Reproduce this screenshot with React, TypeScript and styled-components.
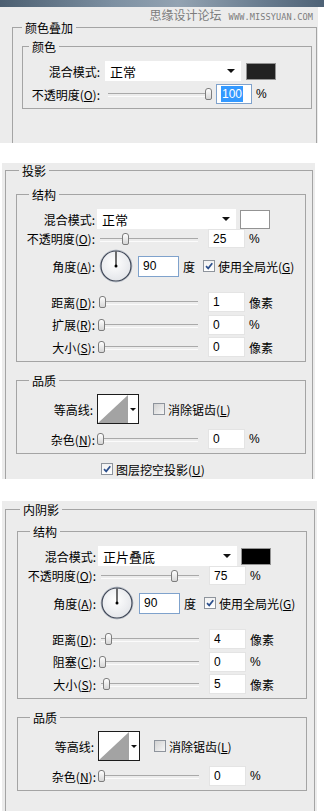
import React from 'react';
import styled, { createGlobalStyle } from 'styled-components';

const GlobalStyle = createGlobalStyle`
  * {
    box-sizing: border-box;
  }

  body {
    margin: 0;
    background: #fff;
    color: #000;
    font-family: 'Noto Sans CJK SC', 'Noto Sans', sans-serif;
    font-size: 12px;
  }
`;

const TitleBar = styled.div`
  height: 7px;
  background: linear-gradient(90deg, #4c5f71 0%, #7d90a2 35%, #93a3b2 55%, #6a7d90 80%, #4e6276 100%);
`;

type PanelProps = {
  $top: number;
  $left: number;
  $width: number;
  $height: number;
  $padTop: number;
  $padLeft: number;
};

const Panel = styled.section<PanelProps>`
  position: relative;
  display: flex;
  flex-direction: column;
  margin: ${(p) => p.$top}px 0 0 ${(p) => p.$left}px;
  width: ${(p) => p.$width}px;
  height: ${(p) => p.$height}px;
  padding: ${(p) => p.$padTop}px 0 0 ${(p) => p.$padLeft}px;
  background: #ececec;
  overflow: hidden;
`;

const Watermark = styled.div`
  position: absolute;
  top: 1px;
  right: 5px;
  display: flex;
  align-items: baseline;
  gap: 7px;
  color: #7c7c7c;
  line-height: 14px;
`;

const WatermarkCn = styled.span`
  font-size: 12px;
`;

const WatermarkEn = styled.span`
  font-family: 'DejaVu Sans Mono', 'Liberation Mono', monospace;
  font-size: 8.6px;
  letter-spacing: 0.1px;
`;

const Group = styled.fieldset<{ $width: number; $pad: string; $open?: boolean; $mt?: number }>`
  display: flex;
  flex-direction: column;
  flex: ${(p) => (p.$open ? 1 : 'none')};
  width: ${(p) => p.$width}px;
  min-width: 0;
  margin: ${(p) => p.$mt ?? 0}px 0 0 0;
  padding: ${(p) => p.$pad};
  border: 1px solid #a4a4a4;
  border-bottom: ${(p) => (p.$open ? 'none' : '1px solid #a4a4a4')};
`;

const Legend = styled.legend<{ $offset: number }>`
  margin-left: ${(p) => p.$offset}px;
  padding: 2px 3px 0;
  font-size: 12px;
  line-height: 12px;
`;

const Row = styled.div<{ $h: number; $mt?: number; $indent?: number }>`
  display: flex;
  align-items: center;
  height: ${(p) => p.$h}px;
  margin-top: ${(p) => p.$mt ?? 0}px;
  padding-left: ${(p) => p.$indent ?? 0}px;
  white-space: nowrap;
`;

const Label = styled.span<{ $w: number; $gap: number }>`
  flex: none;
  width: ${(p) => p.$w}px;
  margin-right: ${(p) => p.$gap}px;
  text-align: right;
`;

const Key = styled.span`
  text-decoration: underline;
`;

const Select = styled.div<{ $w: number; $h: number }>`
  display: flex;
  flex: none;
  align-items: center;
  justify-content: space-between;
  width: ${(p) => p.$w}px;
  height: ${(p) => p.$h}px;
  padding: 0 6px 0 5px;
  background: #fff;
  font-size: 13px;
`;

const Caret = styled.span`
  width: 0;
  height: 0;
  border-left: 4px solid transparent;
  border-right: 4px solid transparent;
  border-top: 4px solid #111;
`;

const Swatch = styled.div<{ $color: string; $h: number; $ml: number }>`
  flex: none;
  width: 30px;
  height: ${(p) => p.$h}px;
  margin-left: ${(p) => p.$ml}px;
  background: ${(p) => p.$color};
  border: 1px solid #939393;
`;

const SliderTrack = styled.div<{ $w: number }>`
  position: relative;
  flex: none;
  width: ${(p) => p.$w}px;
  height: 14px;

  &::before {
    content: '';
    position: absolute;
    left: 3px;
    right: 3px;
    top: 6px;
    height: 2px;
    border-top: 1px solid #a9a9a9;
    border-bottom: 1px solid #fbfbfb;
  }
`;

const Thumb = styled.span`
  position: absolute;
  top: 1px;
  width: 7px;
  height: 12px;
  margin-left: -3.5px;
  border: 1px solid #7d7d7d;
  border-radius: 3px 3px 2px 2px;
  background: linear-gradient(#ffffff, #d6d6d6);
`;

const NumBox = styled.div<{ $w: number; $h: number; $ml: number; $focus?: boolean }>`
  display: flex;
  flex: none;
  align-items: center;
  width: ${(p) => p.$w}px;
  height: ${(p) => p.$h}px;
  margin-left: ${(p) => p.$ml}px;
  padding-left: 4px;
  background: #fff;
  border: 1px solid ${(p) => (p.$focus ? '#7fa2cc' : '#e4e4e4')};
  font-family: 'Liberation Sans', Arial, sans-serif;
  font-size: 12px;
`;

const Selected = styled.span`
  padding: 1px 1px;
  background: #3399ff;
  color: #fff;
`;

const Unit = styled.span<{ $latin?: boolean }>`
  margin-left: 4px;
  font-family: ${(p) => (p.$latin ? "'Liberation Sans', Arial, sans-serif" : "'Noto Sans CJK SC', sans-serif")};
  font-size: 12px;
`;

const DialBox = styled.svg`
  flex: none;
  margin-left: 2px;
`;

const CheckBox = styled.span<{ $on: boolean }>`
  display: inline-flex;
  flex: none;
  align-items: center;
  justify-content: center;
  width: 12px;
  height: 12px;
  margin-left: ${(p) => (p.$on ? 8 : 14)}px;
  margin-right: 3px;
  border: 1px solid #8e949c;
  background: ${(p) => (p.$on ? 'linear-gradient(#f2f2f2, #ffffff)' : 'linear-gradient(135deg, #d2d2d2, #f6f6f6)')};
`;

const Contour = styled.div`
  display: flex;
  flex: none;
  width: 42px;
  height: 30px;
  border: 1px solid #1c1c1c;
  background: #fff;
`;

const ContourDrop = styled.div`
  display: flex;
  flex: 1;
  align-items: center;
  justify-content: center;

  &::after {
    content: '';
    border-left: 3px solid transparent;
    border-right: 3px solid transparent;
    border-top: 3px solid #111;
  }
`;

const Dial = () => (
  <DialBox width="34" height="34" viewBox="0 0 34 34">
    <defs>
      <radialGradient id="dialFill" cx="0.45" cy="0.4" r="0.6">
        <stop offset="0" stopColor="#ffffff" />
        <stop offset="1" stopColor="#e4e6ea" />
      </radialGradient>
    </defs>
    <circle cx="17" cy="17" r="16" fill="none" stroke="#b8bec8" strokeWidth="1" />
    <circle cx="17" cy="17" r="15" fill="url(#dialFill)" stroke="#3e4656" strokeWidth="1.2" />
    <line x1="17" y1="17" x2="17" y2="2.5" stroke="#111" strokeWidth="1.2" />
    <circle cx="17" cy="17" r="1.5" fill="#000" />
  </DialBox>
);

const Check = ({ on }: { on: boolean }) => (
  <CheckBox $on={on}>
    {on && (
      <svg width="10" height="10" viewBox="0 0 10 10">
        <path d="M2 5.2 L4.2 7.4 L8.3 2.2" fill="none" stroke="#2c4f8c" strokeWidth="1.7" />
      </svg>
    )}
  </CheckBox>
);

const ContourPicker = () => (
  <Contour>
    <svg width="30" height="28" viewBox="0 0 30 28">
      <polygon points="0,28 30,0 30,28" fill="#a3a3a3" />
    </svg>
    <ContourDrop />
  </Contour>
);

const Slider = ({ w, value }: { w: number; value: number }) => (
  <SliderTrack $w={w}>
    <Thumb style={{ left: `${3 + value * (w - 6)}px` }} />
  </SliderTrack>
);

/* shared measures of the two shadow panels */
const LW = 78;
const LG = 2;
const SW = 104;

type ShadowProps = {
  title: string;
  mode: string;
  swatch: string;
  swatchH: number;
  opacity: number;
  opacityText: string;
  rows: { label: string; key: string; value: number; text: string; unit: string }[];
  knockout?: boolean;
  panel: PanelProps;
  outerWidth: number;
  outerPad: string;
};

const ShadowPanel = (p: ShadowProps) => (
  <Panel {...p.panel}>
    <Group $width={p.outerWidth} $pad={p.outerPad} $open>
      <Legend $offset={3}>{p.title}</Legend>
      <Group $width={290} $pad="8px 0 4px 0">
        <Legend $offset={12}>结构</Legend>
        <Row $h={20}>
          <Label $w={LW} $gap={LG}>混合模式:</Label>
          <Select $w={139} $h={20}>
            {p.mode}
            <Caret />
          </Select>
          <Swatch $color={p.swatch} $h={p.swatchH} $ml={4} />
        </Row>
        <Row $h={19}>
          <Label $w={LW} $gap={LG}>
            不透明度(<Key>O</Key>):
          </Label>
          <Slider w={SW} value={p.opacity} />
          <NumBox $w={37} $h={19} $ml={7}>{p.opacityText}</NumBox>
          <Unit $latin>%</Unit>
        </Row>
        <Row $h={34} $mt={1}>
          <Label $w={LW} $gap={LG}>
            角度(<Key>A</Key>):
          </Label>
          <Dial />
          <NumBox $w={41} $h={21} $ml={5} $focus>90</NumBox>
          <Unit>度</Unit>
          <Check on />
          使用全局光(<Key>G</Key>)
        </Row>
        {p.rows.map((r, i) => (
          <Row key={r.label} $h={20} $mt={i === 0 ? 9 : 2.5}>
            <Label $w={LW} $gap={LG}>
              {r.label}(<Key>{r.key}</Key>):
            </Label>
            <Slider w={SW} value={r.value} />
            <NumBox $w={37} $h={20} $ml={7}>{r.text}</NumBox>
            <Unit $latin={r.unit === '%'}>{r.unit}</Unit>
          </Row>
        ))}
      </Group>
      <Group $width={290} $pad="7px 0 4px 0" $mt={11}>
        <Legend $offset={12}>品质</Legend>
        <Row $h={30}>
          <Label $w={76} $gap={4}>等高线:</Label>
          <ContourPicker />
          <Check on={false} />
          消除锯齿(<Key>L</Key>)
        </Row>
        <Row $h={20} $mt={5}>
          <Label $w={LW} $gap={LG}>
            杂色(<Key>N</Key>):
          </Label>
          <Slider w={SW} value={0.01} />
          <NumBox $w={37} $h={20} $ml={7}>0</NumBox>
          <Unit $latin>%</Unit>
        </Row>
      </Group>
      {p.knockout && (
        <Row $h={16} $mt={7} $indent={77}>
          <Check on />
          图层挖空投影(<Key>U</Key>)
        </Row>
      )}
    </Group>
  </Panel>
);

const App: React.FC = () => {
  return (
    <>
      <GlobalStyle />
      <TitleBar />
      <Panel $top={0} $left={0} $width={318} $height={136} $padTop={13} $padLeft={12}>
        <Watermark>
          <WatermarkCn>思缘设计论坛</WatermarkCn>
          <WatermarkEn>WWW.MISSYUAN.COM</WatermarkEn>
        </Watermark>
        <Group $width={305} $pad="5px 4px 0 9px" $open>
          <Legend $offset={0}>颜色叠加</Legend>
          <Group $width={290} $pad="8px 0 4px 0">
            <Legend $offset={6}>颜色</Legend>
            <Row $h={20}>
              <Label $w={77} $gap={5}>混合模式:</Label>
              <Select $w={136} $h={20}>
                正常
                <Caret />
              </Select>
              <Swatch $color="#222222" $h={17} $ml={5} />
            </Row>
            <Row $h={20} $mt={3}>
              <Label $w={77} $gap={5}>
                不透明度(<Key>O</Key>):
              </Label>
              <Slider w={106} value={1} />
              <NumBox $w={36} $h={20} $ml={5} $focus>
                <Selected>100</Selected>
              </NumBox>
              <Unit $latin>%</Unit>
            </Row>
          </Group>
        </Group>
      </Panel>
      <ShadowPanel
        title="投影"
        mode="正常"
        swatch="#ffffff"
        swatchH={19}
        opacity={0.26}
        opacityText="25"
        rows={[
          { label: '距离', key: 'D', value: 0.03, text: '1', unit: '像素' },
          { label: '扩展', key: 'R', value: 0.02, text: '0', unit: '%' },
          { label: '大小', key: 'S', value: 0.02, text: '0', unit: '像素' },
        ]}
        knockout
        panel={{ $top: 20, $left: 2, $width: 313, $height: 316, $padTop: 0, $padLeft: 3 }}
        outerWidth={308}
        outerPad="10px 5px 0 10px"
      />
      <ShadowPanel
        title="内阴影"
        mode="正片叠底"
        swatch="#000000"
        swatchH={17}
        opacity={0.75}
        opacityText="75"
        rows={[
          { label: '距离', key: 'D', value: 0.08, text: '4', unit: '像素' },
          { label: '阻塞', key: 'C', value: 0.02, text: '0', unit: '%' },
          { label: '大小', key: 'S', value: 0.06, text: '5', unit: '像素' },
        ]}
        panel={{ $top: 22, $left: 2, $width: 315, $height: 310, $padTop: 1, $padLeft: 3 }}
        outerWidth={310}
        outerPad="8px 5px 0 11px"
      />
    </>
  );
};

export default App;
